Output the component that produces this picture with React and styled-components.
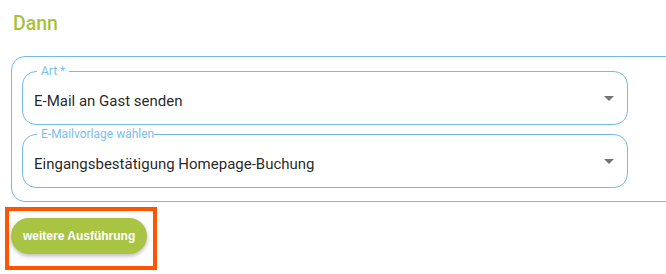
import styled, { createGlobalStyle } from "styled-components";

const GlobalStyle = createGlobalStyle`
  body {
    margin: 0;
    background: #fff;
    overflow: hidden;
    font-family: Roboto, "Liberation Sans", sans-serif;
  }
`;

const Page = styled.div`
  padding: 12px 0 0 5px;
`;

const Title = styled.h2`
  margin: 0 0 0 8px;
  font-family: Roboto, sans-serif;
  font-weight: 500;
  font-size: 19.5px;
  line-height: 24px;
  color: #a8c23c;
`;

const Panel = styled.div`
  margin: 20px 0 0 6px;
  width: 720px;
  box-sizing: border-box;
  border: 1px solid #74bbe6;
  border-radius: 14px;
  padding: 8px 0 13px 10px;
  display: flex;
  flex-direction: column;
  gap: 3px;
`;

const Field = styled.fieldset`
  margin: 0;
  width: 606px;
  min-width: 0;
  box-sizing: border-box;
  border: 1px solid #74bbe6;
  border-radius: 14px;
  padding: 15px 0 13px 11px;
`;

const Legend = styled.legend`
  margin-left: 3px;
  padding: ${(p) => (p.$tight ? "0 0 0 4px" : "0 4px")};
  font-size: 12px;
  line-height: 12px;
  color: #7cc0ea;
`;

const Row = styled.div`
  display: flex;
  align-items: center;
  height: 19px;
`;

const Value = styled.span`
  flex: 1;
  font-size: 15px;
  line-height: 19px;
  color: rgba(0, 0, 0, 0.87);
`;

const Arrow = styled.svg`
  width: 24px;
  height: 24px;
  margin: 0 6px 7px 0;
  fill: #757575;
  flex-shrink: 0;
`;

const Highlight = styled.div`
  margin-top: 5px;
  width: 152px;
  height: 63px;
  box-sizing: border-box;
  border: 4px solid #ff5500;
  padding: 7px 0 0 2px;
`;

const Button = styled.button`
  height: 36px;
  padding: 0 12px;
  border: none;
  border-radius: 18px;
  background: #a9c443;
  color: #fff;
  font-family: "Liberation Sans", Arial, sans-serif;
  font-weight: bold;
  font-size: 12px;
  box-shadow: 0 2px 4px rgba(0, 0, 0, 0.28);
  cursor: pointer;
`;

function SelectField({ label, value, tight }) {
  return (
    <Field>
      <Legend $tight={tight}>{label}</Legend>
      <Row>
        <Value>{value}</Value>
        <Arrow viewBox="0 0 24 24">
          <path d="M7 10l5 5 5-5z" />
        </Arrow>
      </Row>
    </Field>
  );
}

export default function App() {
  return (
    <Page>
      <GlobalStyle />
      <Title>Dann</Title>
      <Panel>
        <SelectField label="Art *" value="E-Mail an Gast senden" />
        <SelectField
          label="E-Mailvorlage wählen"
          value="Eingangsbestätigung Homepage-Buchung"
          tight
        />
      </Panel>
      <Highlight>
        <Button>weitere Ausführung</Button>
      </Highlight>
    </Page>
  );
}
